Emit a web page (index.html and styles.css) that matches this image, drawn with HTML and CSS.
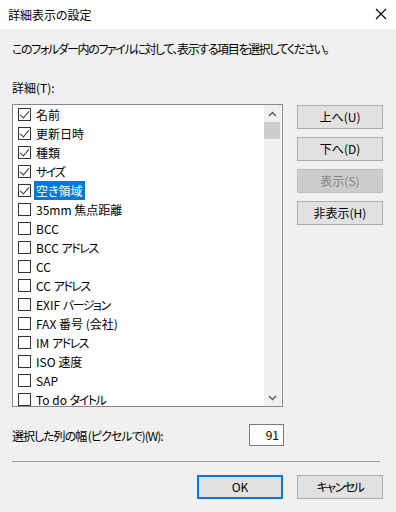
FILE: index.html
```html
<!DOCTYPE html>
<html lang="ja">
<head>
<meta charset="utf-8">
<title>詳細表示の設定</title>
<link rel="stylesheet" href="styles.css">
</head>
<body>
<div class="dialog">
  <div class="titlebar">
    <span class="title">詳細表示の設定</span>
    <svg class="close" width="12" height="12" viewBox="0 0 12 12"><path d="M1 1 L11 11 M11 1 L1 11" stroke="#000" stroke-width="1.1" fill="none"/></svg>
  </div>
  <div class="body">
    <p class="intro">このフォルダー内のファイルに対して、表示する項目を選択してください。</p>
    <p class="label">詳細(T):</p>
    <div class="main">
      <div class="listbox">
        <ul class="items">
          <li class="item"><span class="cb on"></span><span class="txt">名前</span></li>
          <li class="item"><span class="cb on"></span><span class="txt">更新日時</span></li>
          <li class="item"><span class="cb on"></span><span class="txt">種類</span></li>
          <li class="item"><span class="cb on"></span><span class="txt"><span class="k">サイズ</span></span></li>
          <li class="item"><span class="cb on"></span><span class="txt sel">空き領域</span></li>
          <li class="item"><span class="cb"></span><span class="txt">35mm 焦点距離</span></li>
          <li class="item"><span class="cb"></span><span class="txt">BCC</span></li>
          <li class="item"><span class="cb"></span><span class="txt">BCC <span class="k">アドレス</span></span></li>
          <li class="item"><span class="cb"></span><span class="txt">CC</span></li>
          <li class="item"><span class="cb"></span><span class="txt">CC <span class="k">アドレス</span></span></li>
          <li class="item"><span class="cb"></span><span class="txt">EXIF <span class="k">バージョン</span></span></li>
          <li class="item"><span class="cb"></span><span class="txt">FAX 番号 (会社)</span></li>
          <li class="item"><span class="cb"></span><span class="txt">IM <span class="k">アドレス</span></span></li>
          <li class="item"><span class="cb"></span><span class="txt">ISO 速度</span></li>
          <li class="item"><span class="cb"></span><span class="txt">SAP</span></li>
          <li class="item"><span class="cb"></span><span class="txt">To do <span class="k">タイトル</span></span></li>
        </ul>
        <div class="scrollbar">
          <div class="arrow"><svg width="9" height="6" viewBox="0 0 9 6"><path d="M1 5 L4.5 1.5 L8 5" stroke="#606060" stroke-width="1.5" fill="none"/></svg></div>
          <div class="thumb"></div>
          <div class="track"></div>
          <div class="arrow"><svg width="9" height="6" viewBox="0 0 9 6"><path d="M1 1 L4.5 4.5 L8 1" stroke="#606060" stroke-width="1.5" fill="none"/></svg></div>
        </div>
      </div>
      <div class="side">
        <button class="btn">上へ(U)</button>
        <button class="btn">下へ(D)</button>
        <button class="btn disabled">表示(S)</button>
        <button class="btn">非表示(H)</button>
      </div>
    </div>
    <div class="widthrow">
      <span class="wlabel">選択した列の幅 (ピクセルで)(W):</span>
      <span class="num">91</span>
    </div>
    <div class="sep"></div>
    <div class="footer">
      <button class="btn default">OK</button>
      <button class="btn"><span class="k">キャンセル</span></button>
    </div>
  </div>
</div>
</body>
</html>
```
FILE: styles.css
```css
* { box-sizing: border-box; }
html, body {
  margin: 0;
  padding: 0;
  background: #f0f0f0;
  font-family: "Noto Sans CJK JP", "Noto Sans", sans-serif;
  font-size: 12px;
  color: #000;
  font-feature-settings: "palt";
}
.dialog { width: 396px; height: 512px; background: #f0f0f0; }
.titlebar {
  height: 29px;
  background: #fff;
  display: flex;
  align-items: center;
  justify-content: space-between;
  padding: 0 9px 0 8px;
}
.title { line-height: 16px; }
.close { display: block; margin-top: -2px; }
.body { padding: 0 13px 0 12px; }
.intro { margin: 0; padding-top: 12px; line-height: 16px; white-space: nowrap; letter-spacing: -1.4px; }
.label { margin: 23px 0 0 0; line-height: 16px; }
.k { letter-spacing: -1.5px; }
.main { display: flex; margin-top: 8px; gap: 14px; }
.listbox {
  width: 271px;
  height: 303px;
  border: 1px solid #828790;
  background: #fff;
  display: flex;
  overflow: hidden;
}
.items { list-style: none; margin: 0; padding: 0; flex: 1; }
.item {
  height: 19px;
  display: flex;
  align-items: center;
  padding-left: 5px;
}
.cb {
  width: 13px;
  height: 13px;
  border: 1px solid #333;
  background: #fff;
  flex: none;
  margin-right: 3px;
  position: relative;
}
.cb.on::after {
  content: "";
  position: absolute;
  left: 3px;
  top: 0px;
  width: 4px;
  height: 8px;
  border-right: 1px solid #333;
  border-bottom: 1px solid #333;
  transform: rotate(40deg);
}
.txt { padding: 0 2px; line-height: 19px; white-space: nowrap; }
.txt.sel { background: #0078d7; color: #fff; }
.scrollbar {
  width: 17px;
  margin-right: 1px;
  background: #f0f0f0;
  display: flex;
  flex-direction: column;
}
.arrow { height: 17px; display: flex; align-items: center; justify-content: center; }
.thumb { height: 17px; background: #cdcdcd; margin: 0 1px 0 0; }
.track { flex: 1; }
.side { display: flex; flex-direction: column; gap: 8px; margin-top: 1px; }
.btn {
  font: inherit;
  width: 86px;
  height: 24px;
  background: #e1e1e1;
  border: 1px solid #adadad;
  color: #000;
  padding: 0;
  line-height: 20px;
}
.btn.disabled { background: #cccccc; border-color: #bfbfbf; color: #838383; }
.btn.default { border: 2px solid #0078d7; }
.widthrow {
  display: flex;
  align-items: center;
  justify-content: space-between;
  width: 272px;
  margin-top: 17px;
}
.wlabel { letter-spacing: -1px; }
.num {
  width: 35px;
  height: 22px;
  border: 1px solid #7a7a7a;
  background: #fff;
  text-align: right;
  padding-right: 4px;
  line-height: 20px;
}
.sep { height: 1px; background: #a0a0a0; margin-top: 15px; width: 368px; }
.footer { display: flex; justify-content: flex-end; gap: 14px; margin-top: 13px; }
```
